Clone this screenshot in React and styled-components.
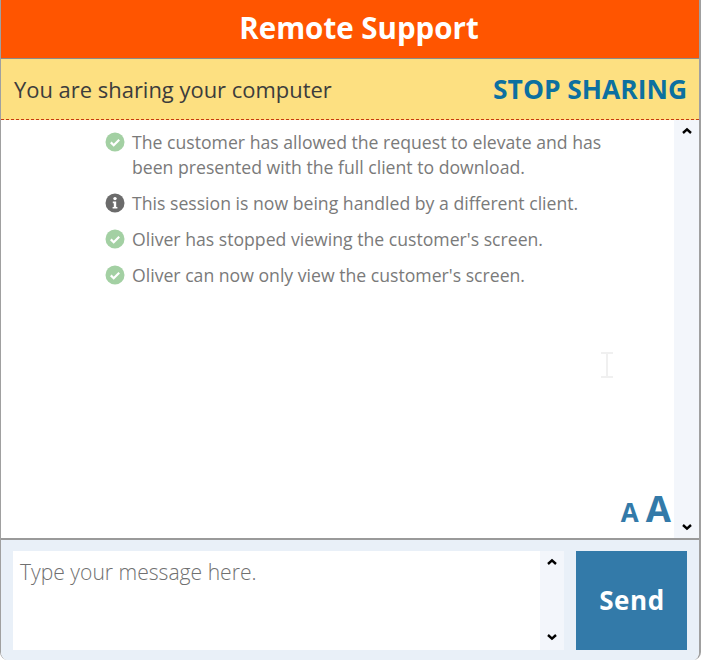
import React from 'react';
import styled, { createGlobalStyle } from 'styled-components';

const GlobalStyle = createGlobalStyle`
    html, body {
        margin: 0;
        padding: 0;
        background: #ffffff;
    }
    * {
        box-sizing: border-box;
    }
`;

const Window = styled.div`
    width: 701px;
    height: 660px;
    display: flex;
    flex-direction: column;
    overflow: hidden;
    font-family: 'Open Sans', sans-serif;
    border-left: 1px solid #a0a0a0;
    border-right: 2px solid #a0a0a0;
    border-bottom-left-radius: 8px;
    border-bottom-right-radius: 8px;
`;

const Header = styled.header`
    height: 59px;
    flex: none;
    display: flex;
    align-items: center;
    justify-content: center;
    padding: 0 0 3px 18px;
    background: #ff5500;
    border-bottom: 1px solid #8c8c8c;
    color: #ffffff;
    font-size: 29.5px;
    font-weight: 700;
`;

const Banner = styled.div`
    height: 61px;
    flex: none;
    display: flex;
    align-items: center;
    justify-content: space-between;
    padding: 0 12px 0 13px;
    background: #fde081;
    border-bottom: 1px dashed #c8380f;
`;

const BannerText = styled.span`
    color: #3c3c3c;
    font-size: 21.95px;
`;

const StopButton = styled.a`
    color: #0c70a0;
    font-size: 26.4px;
    font-weight: 700;
    cursor: pointer;
`;

const Body = styled.div`
    flex: 1;
    min-height: 0;
    display: flex;
    background: #ffffff;
    border-bottom: 2px solid #9a9a9a;
`;

const Messages = styled.div`
    flex: 1;
    position: relative;
    padding: 10px 70px 0 104px;
`;

const MessageRow = styled.div`
    display: flex;
    align-items: flex-start;
    gap: 7px;
    margin-bottom: 11.5px;
    color: #7a7a7a;
    font-size: 17.65px;
    line-height: 24.5px;
`;

const MessageIcon = styled.svg`
    flex: none;
    width: 20px;
    height: 20px;
    margin-top: 2px;
`;

const TextCursor = styled.svg`
    position: absolute;
    left: 599px;
    top: 232px;
    width: 14px;
    height: 26px;
`;

const FontSizer = styled.div`
    position: absolute;
    right: 3px;
    bottom: 12px;
    display: flex;
    align-items: baseline;
    gap: 7px;
    color: #337aa9;
    font-weight: 700;
`;

const SizeOption = styled.span`
    font-size: ${(p) => p.$size}px;
    line-height: 1;
`;

const Scrollbar = styled.div`
    flex: none;
    width: ${(p) => p.$width}px;
    display: flex;
    flex-direction: column;
    justify-content: space-between;
    align-items: center;
    padding: 7px 0 ${(p) => p.$bottom}px;
    background: #f3f6fb;
`;

const Arrow = styled.svg`
    width: 12px;
    height: 8px;
`;

const Footer = styled.footer`
    flex: none;
    height: 120px;
    display: flex;
    gap: 12px;
    padding: 11px 12px 10px 12px;
    background: #e9f0f8;
`;

const InputBox = styled.div`
    flex: 1;
    display: flex;
    background: #ffffff;
`;

const MessageInput = styled.div`
    flex: 1;
    padding: 6px 7px;
    color: #707070;
    font-size: 21.1px;
    font-weight: 300;
    line-height: 30px;
`;

const SendButton = styled.button`
    flex: none;
    width: 111px;
    padding: 0 0 2px 1px;
    border: none;
    background: #337aa9;
    color: #ffffff;
    font-family: inherit;
    font-size: 26px;
    font-weight: 700;
    letter-spacing: 0.6px;
`;

const CheckIcon = () => (
    <MessageIcon viewBox="0 0 20 20">
        <circle cx="10" cy="10" r="9.5" fill="#a3d0a3" />
        <path d="M5.8 10.4l2.9 2.9 5.5-5.6" fill="none" stroke="#ffffff" strokeWidth="2.2" />
    </MessageIcon>
);

const InfoIcon = () => (
    <MessageIcon viewBox="0 0 20 20">
        <circle cx="10" cy="10" r="9.5" fill="#6b6b6b" />
        <circle cx="10" cy="5.6" r="1.7" fill="#ffffff" />
        <path d="M7.8 8.6h3.4v5.4h1.2v1.6H7.6V14h1.2v-3.8h-1z" fill="#ffffff" />
    </MessageIcon>
);

const ArrowUp = () => (
    <Arrow viewBox="0 0 12 8">
        <path d="M2 6l4-3.6L10 6" fill="none" stroke="#000000" strokeWidth="2.4" />
    </Arrow>
);

const ArrowDown = () => (
    <Arrow viewBox="0 0 12 8">
        <path d="M2 2l4 3.6L10 2" fill="none" stroke="#000000" strokeWidth="2.4" />
    </Arrow>
);

const messages = [
    { icon: 'check', text: 'The customer has allowed the request to elevate and has been presented with the full client to download.' },
    { icon: 'info', text: 'This session is now being handled by a different client.' },
    { icon: 'check', text: "Oliver has stopped viewing the customer's screen." },
    { icon: 'check', text: "Oliver can now only view the customer's screen." },
];

const App = () => (
    <Window>
        <GlobalStyle />
        <Header>Remote Support</Header>
        <Banner>
            <BannerText>You are sharing your computer</BannerText>
            <StopButton>STOP SHARING</StopButton>
        </Banner>
        <Body>
            <Messages>
                {messages.map((m) => (
                    <MessageRow key={m.text}>
                        {m.icon === 'check' ? <CheckIcon /> : <InfoIcon />}
                        <span>{m.text}</span>
                    </MessageRow>
                ))}
                <TextCursor viewBox="0 0 14 26">
                    <path d="M1 1h12M7 1v24M1 25h12" fill="none" stroke="#f0f0f0" strokeWidth="2" />
                </TextCursor>
                <FontSizer>
                    <SizeOption $size={26}>A</SizeOption>
                    <SizeOption $size={36.5}>A</SizeOption>
                </FontSizer>
            </Messages>
            <Scrollbar $width={25} $bottom={7}>
                <ArrowUp />
                <ArrowDown />
            </Scrollbar>
        </Body>
        <Footer>
            <InputBox>
                <MessageInput>Type your message here.</MessageInput>
                <Scrollbar $width={24} $bottom={9}>
                    <ArrowUp />
                    <ArrowDown />
                </Scrollbar>
            </InputBox>
            <SendButton>Send</SendButton>
        </Footer>
    </Window>
);

export default App;
